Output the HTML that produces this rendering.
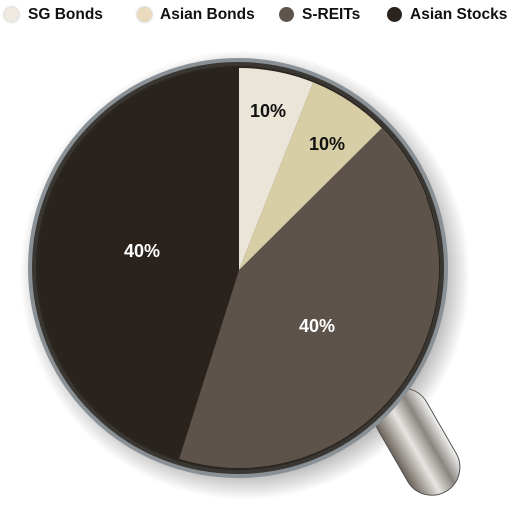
<!DOCTYPE html>
<html><head><style>
body{margin:0;background:#fff;width:512px;height:514px;overflow:hidden;font-family:"Liberation Sans",sans-serif;}
.lg{position:absolute;top:6px;font-weight:bold;font-size:15.5px;color:#111;}
.dot{position:absolute;top:7px;width:15px;height:15px;border-radius:50%;}
</style></head><body>
<div class="dot" style="left:4px;background:#efe9df;box-shadow:0 0 2px #aaa"></div><div class="lg" style="left:28px">SG Bonds</div>
<div class="dot" style="left:137px;background:#eadbbd;box-shadow:0 0 2px #aaa"></div><div class="lg" style="left:160px">Asian Bonds</div>
<div class="dot" style="left:279px;background:#5f544d"></div><div class="lg" style="left:302px">S-REITs</div>
<div class="dot" style="left:387px;background:#2a231e"></div><div class="lg" style="left:410px">Asian Stocks</div>
<svg width="512" height="514" style="position:absolute;left:0;top:0">
<defs>
<radialGradient id="sh" cx="0.5" cy="0.5" r="0.5"><stop offset="0.85" stop-color="#000" stop-opacity="0.35"/><stop offset="1" stop-color="#000" stop-opacity="0"/></radialGradient>
<linearGradient id="hd" x1="0" y1="0" x2="1" y2="0"><stop offset="0" stop-color="#6a625a"/><stop offset="0.4" stop-color="#e8e6e2"/><stop offset="0.7" stop-color="#8a8580"/><stop offset="1" stop-color="#f4f4f2"/></linearGradient>
<clipPath id="pc"><circle cx="239" cy="268" r="200"/></clipPath>
</defs>
<ellipse cx="245" cy="275" rx="225" ry="225" fill="url(#sh)"/>
<g transform="rotate(-30 415 440)"><rect x="388" y="385" width="56" height="115" rx="28" fill="url(#hd)" stroke="#555" stroke-width="1"/></g>
<circle cx="238" cy="268" r="208" fill="#3a3733" stroke="#8a9196" stroke-width="4"/>
<circle cx="238" cy="268" r="202" fill="#2b2520"/>
<g clip-path="url(#pc)">
<path d="M239 270 L239 40 L330 40 Z" fill="#ebe5d8"/>
<path d="M239 270 L330 40 L470 40 L470 40 L470 30 Z M239 270 L330 40 L470 40 L470 180 Z" fill="#d8cea6"/>
<path d="M239 270 L470 40 L470 180 Z" fill="#d8cea6"/>
<path d="M239 270 L400 110 L470 110 L470 500 L166 500 Z" fill="#5e534b"/>
<path d="M239 270 L166 500 L0 500 L0 0 L239 0 Z" fill="#2a221d"/>
</g>
<g font-family="Liberation Sans" font-weight="bold" font-size="18">
<text x="250" y="117" fill="#111">10%</text>
<text x="309" y="150" fill="#111">10%</text>
<text x="124" y="257" fill="#fff">40%</text>
<text x="299" y="332" fill="#fff">40%</text>
</g>
</svg>
</body></html>
